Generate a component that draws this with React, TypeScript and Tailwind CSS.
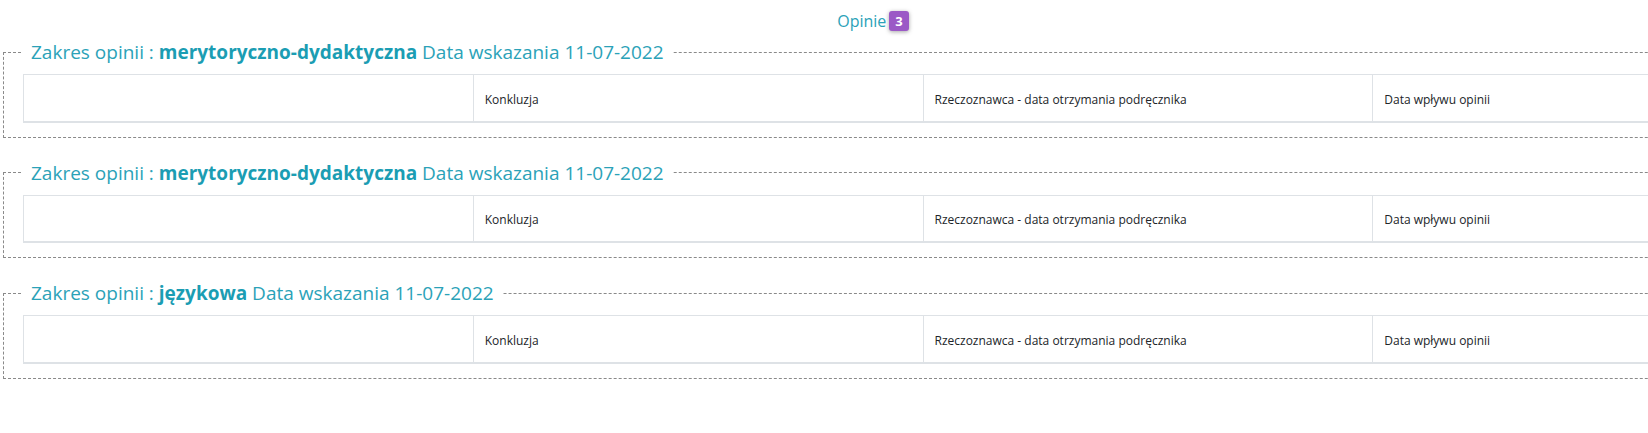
const OPINIE = [
  { zakres: "merytoryczno-dydaktyczna", data: "11-07-2022" },
  { zakres: "merytoryczno-dydaktyczna", data: "11-07-2022" },
  { zakres: "językowa", data: "11-07-2022" },
];

const COLUMNS = ["", "Konkluzja", "Rzeczoznawca - data otrzymania podręcznika", "Data wpływu opinii"];

function OpiniaFieldset({ zakres, data }: { zakres: string; data: string }) {
  return (
    <fieldset className="mx-[3px] border border-dashed border-[#8a8a8a] pl-[17px] pr-[19px] pb-[14px] pt-0">
      <legend className="pl-[10px] pr-[9px] text-[19px] leading-[28px] font-normal text-[#2ba2b8]">
        Zakres opinii : <span className="font-bold text-[#1b9db3]">{zakres}</span> Data wskazania {data}
      </legend>
      <table className="ml-[2px] mt-[8px] w-[1800px] table-fixed border-collapse">
        <thead>
          <tr>
            {COLUMNS.map((c, i) => (
              <th
                key={i}
                className="h-[47px] border border-b-2 border-[#dee2e6] px-[11px] pb-[12px] text-left align-bottom text-[12px] font-normal text-[#212529]"
              >
                {c}
              </th>
            ))}
          </tr>
        </thead>
      </table>
    </fieldset>
  );
}

export default function App() {
  return (
    <div className="min-h-[433px] w-full overflow-hidden bg-white font-['Segoe_UI','Open_Sans',sans-serif]">
      <div className="w-[1746px]">
        <div className="flex h-[38px] items-center justify-center gap-[3px] pt-[4px]">
          <span className="text-[16px] text-[#2ba2b8]">Opinie</span>
          <span className="rounded-[3px] bg-[#9b59c6] px-[6px] text-[13px] leading-[20px] font-bold text-white shadow-[0_1px_4px_rgba(0,0,0,0.35)]">
            3
          </span>
        </div>
        <div className="flex flex-col gap-[21px]">
          {OPINIE.map((o, i) => (
            <OpiniaFieldset key={i} zakres={o.zakres} data={o.data} />
          ))}
        </div>
      </div>
    </div>
  );
}
